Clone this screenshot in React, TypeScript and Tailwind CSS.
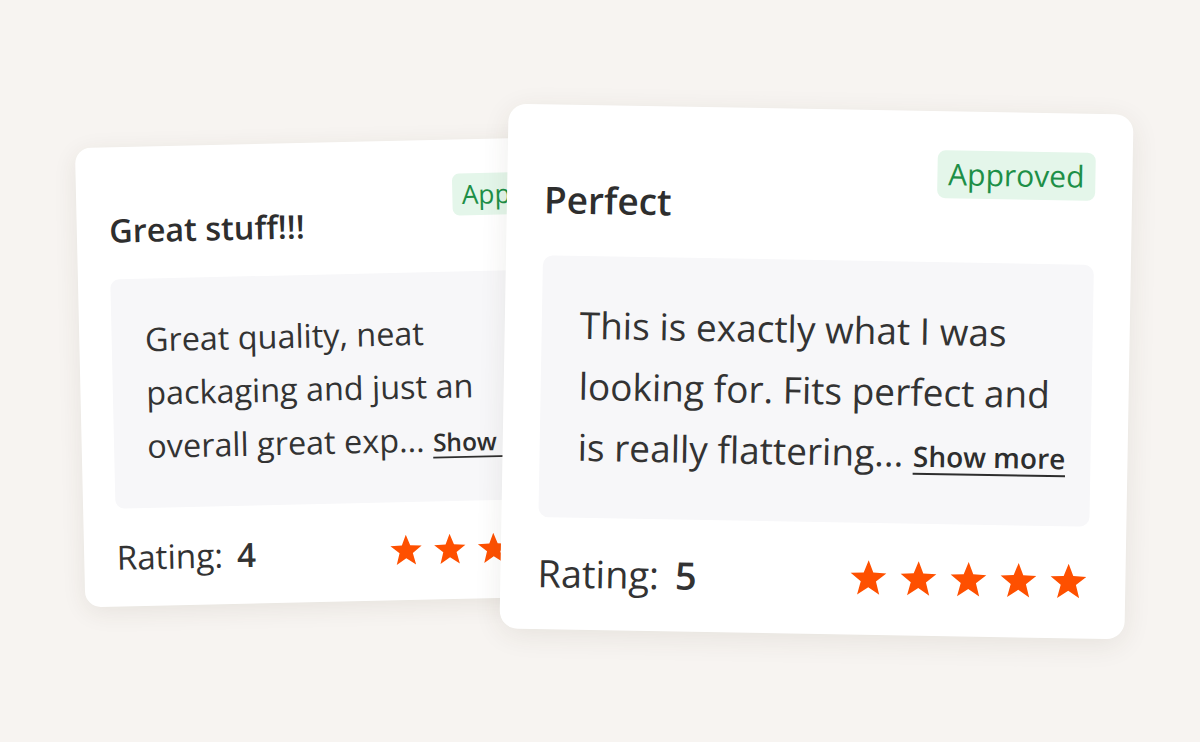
import React from 'react';

type Review = {
  title: string;
  lines: string[];
  tail: string;
  rating: number;
};

const reviews: Review[] = [
  {
    title: 'Great stuff!!!',
    lines: ['Great quality, neat', 'packaging and just an'],
    tail: 'overall great exp...',
    rating: 4,
  },
  {
    title: 'Perfect',
    lines: ['This is exactly what I was', 'looking for. Fits perfect and'],
    tail: 'is really flattering...',
    rating: 5,
  },
];

function Star({ filled }: { filled: boolean }) {
  return (
    <svg viewBox="0 0 24 23" className="w-[40px] h-[38px]">
      <polygon
        points="12,0.8 14.9,8.2 22.8,8.6 16.6,13.6 18.7,21.6 12,17.1 5.3,21.6 7.4,13.6 1.2,8.6 9.1,8.2"
        fill={filled ? '#fe5000' : '#e5e5e5'}
      />
    </svg>
  );
}

function ReviewCard({ review, className }: { review: Review; className: string }) {
  return (
    <div
      className={`w-[625px] h-[525px] shrink-0 bg-white rounded-[18px] shadow-[0_6px_28px_rgba(70,50,30,0.09)] pt-[39px] px-[37px] pb-[33px] flex flex-col ${className}`}
    >
      {/* Header */}
      <div className="flex justify-between items-start">
        <h2 className="mt-[33px] text-[37px] leading-[45px] font-semibold text-[#2e2e2e]">
          {review.title}
        </h2>
        <span className="h-[48px] px-[11px] rounded-[8px] bg-[#e4f6ea] text-[#1d8f47] text-[30px] leading-[48px] font-medium">
          Approved
        </span>
      </div>

      {/* Body */}
      <div className="mt-[34px] h-[262px] rounded-[10px] bg-[#f7f7f9] pt-[38px] px-[38px]">
        <p className="text-[37px] leading-[61px] text-[#333333] whitespace-nowrap">
          {review.lines.map((l) => (
            <React.Fragment key={l}>
              {l}
              <br />
            </React.Fragment>
          ))}
          {review.tail}{' '}
          <span className="text-[28px] font-semibold underline decoration-2 underline-offset-[6px] text-[#2e2e2e]">
            Show more
          </span>
        </p>
      </div>

      {/* Rating */}
      <div className="mt-[31px] h-[48px] flex items-center justify-between">
        <div className="text-[38px] leading-[48px] text-[#333333]">
          Rating: <span className="font-semibold ml-[6px]">{review.rating}</span>
        </div>
        <div className="flex items-center gap-[10px]">
          {[1, 2, 3, 4, 5].map((i) => (
            <Star key={i} filled={i <= review.rating} />
          ))}
        </div>
      </div>
    </div>
  );
}

export default function App() {
  return (
    <div
      className="w-[1200px] h-[742px] bg-[#f7f4f1] flex items-center pl-[41px] overflow-hidden"
      style={{ fontFamily: '"Open Sans", "Noto Sans", sans-serif' }}
    >
      <ReviewCard review={reviews[0]} className="scale-[0.875] -rotate-[1.3deg]" />
      <ReviewCard review={reviews[1]} className="relative z-10 -ml-[162px] rotate-[1deg]" />
    </div>
  );
}
